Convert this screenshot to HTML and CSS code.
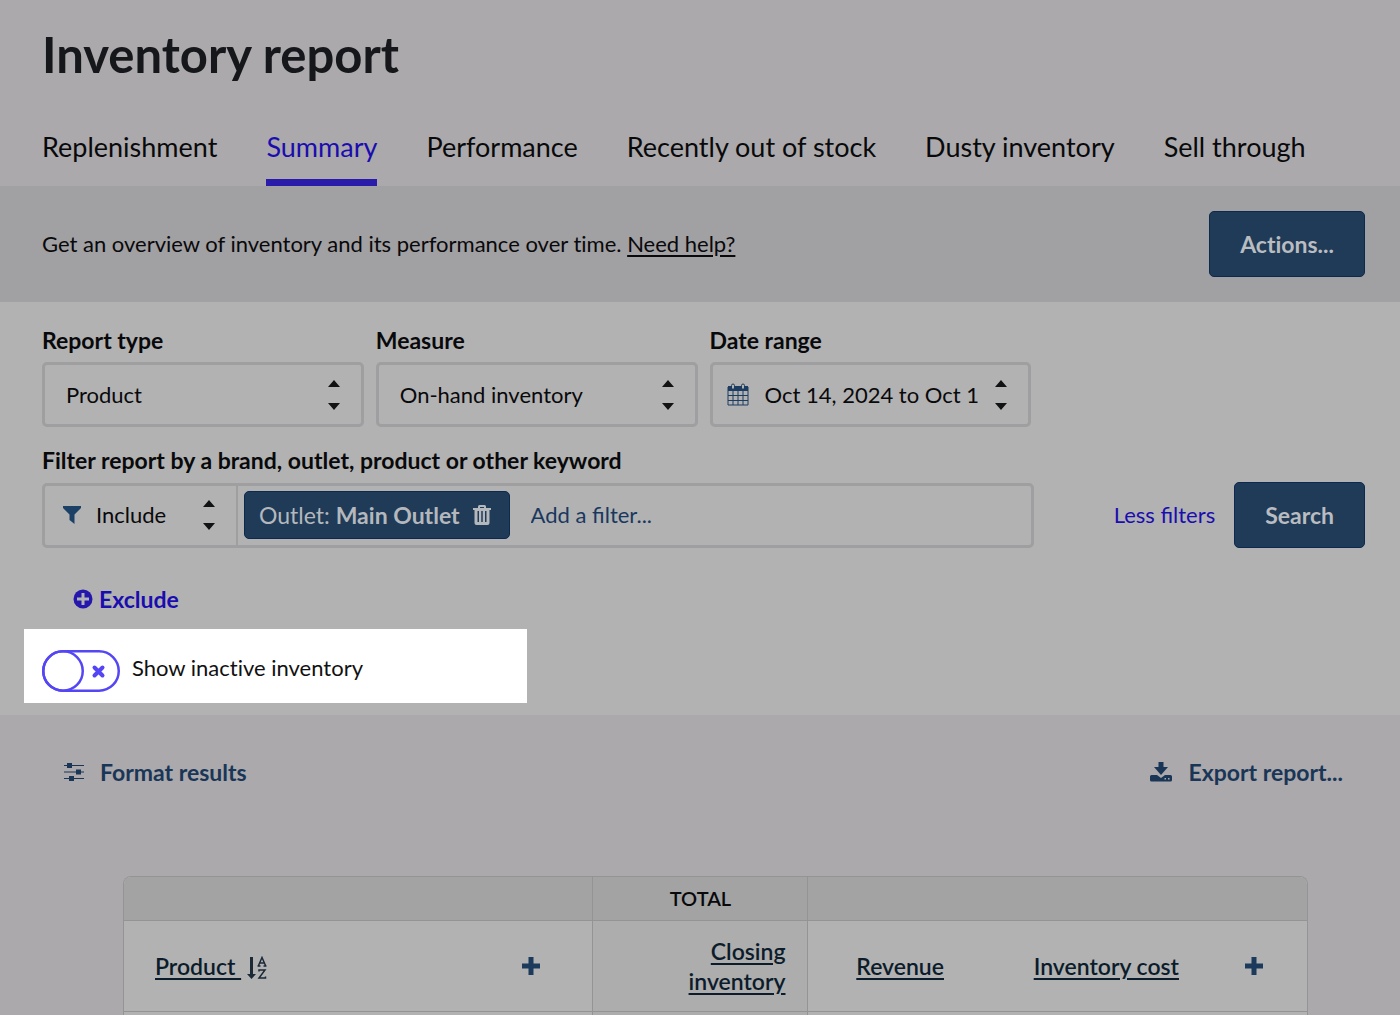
FILE: index.html
```html
<!DOCTYPE html>
<html lang="en">
<head>
  <meta charset="UTF-8">
  <meta name="viewport" content="width=device-width, initial-scale=1">
  <title>Inventory report</title>
  <link rel="stylesheet" href="styles.css">
</head>
<body>

  <header class="header">
    <h1>Inventory report</h1>
    <nav class="tabs">
      <a href="#">Replenishment</a>
      <a href="#" class="active">Summary</a>
      <a href="#">Performance</a>
      <a href="#">Recently out of stock</a>
      <a href="#">Dusty inventory</a>
      <a href="#">Sell through</a>
    </nav>
  </header>

  <section class="intro">
    <p>Get an overview of inventory and its performance over time. <a href="#">Need help?</a></p>
    <button type="button" class="btn btn-actions">Actions...</button>
  </section>

  <form class="filters">
    <div class="fields">
      <div class="field">
        <label for="reportType">Report type</label>
        <div class="select">
          <select id="reportType"><option>Product</option></select>
          <svg class="arrows" width="12" height="30" viewBox="0 0 12 30"><path d="M0 7L6 0l6 7zM0 23h12l-6 7z"/></svg>
        </div>
      </div>
      <div class="field">
        <label for="measure">Measure</label>
        <div class="select">
          <select id="measure"><option>On-hand inventory</option></select>
          <svg class="arrows" width="12" height="30" viewBox="0 0 12 30"><path d="M0 7L6 0l6 7zM0 23h12l-6 7z"/></svg>
        </div>
      </div>
      <div class="field">
        <label for="dateRange">Date range</label>
        <div class="select with-icon">
          <svg class="lead" width="22" height="24" viewBox="0 0 22 24">
            <path class="fill" d="M1 3h20v5H1z"/>
            <path class="line" d="M1 4h20v18H1zM1 12.500h20M1 17.500h20M6 8v14M11 8v14M16 8v14"/>
            <path class="ring" d="M4.500 6V2.500a1.500 1.500 0 0 1 3 0V6zM14.500 6V2.500a1.500 1.500 0 0 1 3 0V6z"/>
          </svg>
          <select id="dateRange"><option>Oct 14, 2024 to Oct 13, 2025</option></select>
          <svg class="arrows" width="12" height="30" viewBox="0 0 12 30"><path d="M0 7L6 0l6 7zM0 23h12l-6 7z"/></svg>
        </div>
      </div>
    </div>

    <div class="field">
      <label for="filterText">Filter report by a brand, outlet, product or other keyword</label>
      <div class="search-row">
        <div class="filter-box">
          <div class="select mode">
            <svg class="lead funnel" width="18" height="18" viewBox="0 0 18 18"><path d="M0 0h18v2l-6.500 6.500V18L6.500 14V8.500L0 2z"/></svg>
            <select aria-label="Filter mode"><option>Include</option></select>
            <svg class="arrows" width="12" height="30" viewBox="0 0 12 30"><path d="M0 7L6 0l6 7zM0 23h12l-6 7z"/></svg>
          </div>
          <span class="tag">
            <span>Outlet: <b>Main Outlet</b></span>
            <button type="button" aria-label="Remove filter">
              <svg width="18" height="20" viewBox="0 0 18 20"><path fill-rule="evenodd" d="M5 3V1.500Q5 0 6.500 0h5Q13 0 13 1.500V3h5v2h-1.500v13q0 2-2 2h-11q-2 0-2-2V5H0V3zM7 3h4V2H7zM4.500 6v11H6V6zM8.250 6v11h1.500V6zM12 6v11h1.500V6z"/></svg>
            </button>
          </span>
          <input type="text" id="filterText" placeholder="Add a filter...">
        </div>
        <a href="#" class="less">Less filters</a>
        <button type="submit" class="btn">Search</button>
      </div>
    </div>

    <button type="button" class="exclude">
      <svg width="20" height="20" viewBox="0 0 20 20"><circle cx="10" cy="10" r="9.500"/><path d="M10 4v12M4 10h12"/></svg>
      Exclude
    </button>

    <label class="toggle">
      <input type="checkbox">
      <svg width="78" height="42" viewBox="0 0 78 42">
        <rect x="1.250" y="1.250" width="75.500" height="39.500" rx="19.750"/>
        <circle cx="21" cy="21" r="19.750"/>
        <path d="M52.500 17.500l8 8M60.500 17.500l-8 8"/>
      </svg>
      <span>Show inactive inventory</span>
    </label>
  </form>

  <main class="results">
    <div class="toolbar">
      <button type="button">
        <svg width="20" height="18" viewBox="0 0 20 18"><path d="M0 2h20v1H0zM0 8.500h20v1H0zM0 15h20v1H0z"/><path d="M3 0h5v5H3zM12 6.500h5v5h-5zM5 13h5v5H5z"/></svg>
        Format results
      </button>
      <button type="button">
        <svg width="22" height="20" viewBox="0 0 22 20"><path fill-rule="evenodd" d="M8.500 0h5v5H18l-7 8-7-8h4.500zM1.500 13H7l4 3 4-3h5.500q1.500 0 1.500 1.500V18q0 1.500-1.500 1.500h-19Q0 19.500 0 18v-3.500Q0 13 1.500 13zM14.500 16v1.500H16V16zM18 16v1.500h1.500V16z"/></svg>
        Export report...
      </button>
    </div>

    <div class="table-wrap">
      <table>
        <colgroup>
          <col>
          <col class="col-add">
          <col class="col-total">
          <col class="col-revenue">
          <col class="col-cost">
          <col class="col-more">
        </colgroup>
        <thead>
          <tr class="groups">
            <th colspan="2"></th>
            <th class="total">Total</th>
            <th colspan="3"></th>
          </tr>
          <tr class="columns">
            <th class="product">
              <a href="#">Product&nbsp;</a>
              <svg class="sort" width="20" height="24" viewBox="0 0 20 24">
                <path class="down" d="M3 1h3v17h3l-4.500 5L0 18h3z"/>
                <path class="az" d="M11.500 9.500L15 1.500l3.500 8M12.700 7h4.600M10.500 10h3M16.500 10h3M12 15.500V14h6l-6 8h6.500v-1.500"/>
              </svg>
            </th>
            <th class="add"><button type="button" aria-label="Add product column"><svg width="18" height="18" viewBox="0 0 18 18"><path d="M9 0v18M0 9h18"/></svg></button></th>
            <th class="total"><a href="#">Closing inventory</a></th>
            <th><a href="#">Revenue</a></th>
            <th><a href="#">Inventory cost</a></th>
            <th class="add"><button type="button" aria-label="Add measure column"><svg width="18" height="18" viewBox="0 0 18 18"><path d="M9 0v18M0 9h18"/></svg></button></th>
          </tr>
        </thead>
        <tbody>
          <tr>
            <td colspan="2"></td>
            <td class="total"></td>
            <td colspan="3"></td>
          </tr>
        </tbody>
      </table>
    </div>
  </main>

</body>
</html>
```
FILE: styles.css
```css
* {
  box-sizing: border-box;
}

body {
  margin: 0;
  font-family: Lato, sans-serif;
  font-size: 22px;
  line-height: 28px;
  font-variant-ligatures: none;
  color: #09090b;
  background: #aba9ac;
}

button, input, select {
  font: inherit;
  font-variant-ligatures: inherit;
  color: inherit;
  margin: 0;
}

button {
  border: none;
  background: none;
  padding: 0;
  cursor: pointer;
}

a {
  color: inherit;
}

svg {
  flex: none;
}

/* Header */
.header {
  padding: 24px 35px 0 42px;
}

h1 {
  margin: 0;
  font-size: 49px;
  line-height: 60px;
  font-weight: 700;
  color: #16171a;
}

.tabs {
  display: flex;
  gap: 49px;
  margin-top: 45px;
  font-size: 27px;
  line-height: 36px;
}

.tabs a {
  padding-bottom: 14px;
  border-bottom: 7px solid transparent;
  text-decoration: none;
  white-space: nowrap;
}

.tabs .active {
  color: #1a0db0;
  border-color: #2a1cab;
}

/* Intro bar */
.intro {
  display: flex;
  align-items: center;
  justify-content: space-between;
  padding: 25px 35px 25px 42px;
  background: #a1a0a2;
}

.intro p {
  margin: 0;
}

.intro a {
  text-underline-offset: 3px;
}

.btn {
  height: 66px;
  padding: 0 30px;
  border: 1px solid #0d2950;
  border-radius: 5px;
  background: #203b57;
  color: #b9bcc0;
  font-size: 23px;
  font-weight: 700;
}

/* Filters */
.filters {
  display: flex;
  flex-direction: column;
  align-items: flex-start;
  padding: 24px 35px 12px 42px;
  background: #b2b2b2;
}

.fields {
  display: grid;
  grid-template-columns: repeat(4, 1fr);
  gap: 12px;
  width: 100%;
  margin-bottom: 19px;
}

.filters > .field {
  width: 100%;
}

.field > label {
  display: block;
  margin-bottom: 8px;
  font-size: 23px;
  font-weight: 700;
}

.select {
  display: grid;
  align-items: center;
  border: 3px solid #9f9fa1;
  border-radius: 5px;
}

/* the icons share one grid cell with the select under them */
.select > * {
  grid-area: 1 / 1;
}

.select select {
  width: 100%;
  height: 59px;
  padding: 0 50px 0 21px;
  border: none;
  background: none;
  appearance: none;
}

.select svg {
  pointer-events: none;
}

.arrows {
  justify-self: end;
  margin-right: 21px;
  fill: #111214;
}

.lead {
  margin-left: 14px;
}

.lead .fill {
  fill: #1d3d60;
}

.lead .line {
  fill: none;
  stroke: #1d3d60;
}

.lead .ring {
  fill: #b2b2b2;
  stroke: #1d3d60;
}

.with-icon select {
  padding-left: 52px;
}

.funnel {
  margin-left: 18px;
  fill: #1d4066;
}

.search-row {
  display: flex;
  align-items: center;
}

.filter-box {
  display: flex;
  align-items: center;
  width: 75%;
  height: 65px;
  margin-right: auto;
  border: 3px solid #9f9fa1;
  border-radius: 5px;
}

.mode {
  width: 193px;
  border: none;
  border-right: 2px solid #9f9fa1;
  border-radius: 0;
}

.mode select {
  padding: 0 48px 0 51px;
}

.tag {
  display: flex;
  align-items: center;
  gap: 13px;
  height: 48px;
  margin-left: 6px;
  padding: 0 18px 0 14px;
  border: 1px solid #0d2950;
  border-radius: 5px;
  background: #203b57;
  color: #b4b8bd;
  font-size: 23px;
  white-space: nowrap;
}

.tag button {
  display: flex;
}

.tag svg {
  fill: #b4b8bd;
}

.filter-box input {
  flex: 1;
  min-width: 0;
  padding: 0 21px;
  border: none;
  background: none;
  font-variant-ligatures: normal;
}

.filter-box input::placeholder {
  color: #193860;
  opacity: 1;
}

.less {
  margin-right: 19px;
  color: #1a0db0;
  font-variant-ligatures: normal;
  text-decoration: none;
}

.exclude {
  display: flex;
  align-items: center;
  gap: 6px;
  margin: 37px 0 16px 31px;
  color: #1a0db0;
  font-size: 23px;
  font-weight: 700;
}

.exclude circle {
  fill: #2517ad;
}

.exclude path {
  stroke: #b2b2b2;
  stroke-width: 3;
}

.toggle {
  display: flex;
  align-items: center;
  gap: 12px;
  width: 38%;
  height: 74px;
  margin-left: -18px;
  padding: 3px 18px 0 18px;
  background: #fff;
  color: #111;
}

.toggle input {
  position: absolute;
  opacity: 0;
}

.toggle svg {
  margin-top: 6px;
  fill: none;
  stroke: #5446f5;
  stroke-width: 2.5;
}

.toggle path {
  stroke-width: 4;
  stroke-linecap: round;
}

/* Results */
.toolbar {
  display: flex;
  justify-content: space-between;
  padding: 43px 57px 90px 64px;
}

.toolbar button {
  display: flex;
  align-items: center;
  gap: 16px;
  color: #1a3657;
  font-size: 23px;
  font-weight: 700;
}

.toolbar svg {
  fill: #1a3657;
}

.table-wrap {
  margin: 0 92px 0 123px;
  border: 1px solid #949496;
  border-bottom: none;
  border-radius: 8px 8px 0 0;
  overflow: hidden;
}

table {
  width: 100%;
  table-layout: fixed;
  border-collapse: collapse;
  background: #b2b2b2;
}

.col-add {
  width: 124px;
}

.col-total {
  width: 215px;
}

.col-revenue {
  width: 158px;
}

.col-cost {
  width: 235px;
}

.col-more {
  width: 106px;
}

th {
  padding: 0 22px;
  font-weight: 600;
  text-align: right;
}

.total {
  background: #adadad;
  border-left: 1px solid #949494;
  border-right: 1px solid #949494;
}

.groups th {
  height: 43px;
  background: #a3a3a3;
  border-bottom: 1px solid #949494;
  font-size: 20px;
  text-align: center;
  text-transform: uppercase;
}

.columns th {
  height: 91px;
  border-bottom: 1px solid #949494;
  color: #0c1c2b;
  font-size: 23px;
  line-height: 30px;
}

.columns a {
  text-underline-offset: 3px;
}

.columns .product {
  padding-left: 31px;
  text-align: left;
}

.sort {
  vertical-align: -5px;
}

.sort .down {
  fill: #1c2a38;
}

.sort .az {
  fill: none;
  stroke: #1c2a38;
  stroke-width: 1.5;
}

.columns .add {
  padding: 0;
}

.add button {
  display: block;
  margin: 0 auto;
}

.add svg {
  display: block;
  stroke: #1b3a5c;
  stroke-width: 5;
}

td {
  height: 4px;
  padding: 0;
}
```
